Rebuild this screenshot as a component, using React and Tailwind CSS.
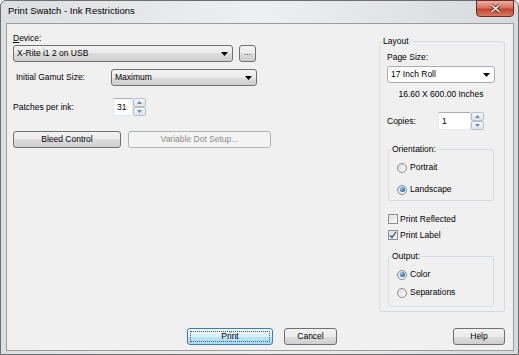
import React from 'react'

const btnFace = 'bg-[linear-gradient(#f2f2f2_0%,#ebebeb_50%,#dddddd_50%,#cfcfcf_100%)]'

const Arrow = () => (
  <svg width="7" height="4" viewBox="0 0 7 4" className="shrink-0">
    <path d="M0 0h7L3.5 4z" fill="#000" />
  </svg>
)

const Button = ({ children, className = '' }) => (
  <div
    className={`h-[17px] flex items-center justify-center rounded-[3px] border border-[#707070] ${btnFace} ${className}`}
  >
    {children}
  </div>
)

const Combo = ({ value, className = '', white }) => (
  <div
    className={`h-[17px] flex items-center justify-between pl-[3px] pr-[4px] rounded-[3px] border ${
      white ? 'border-[#abadb3] bg-white' : `border-[#707070] ${btnFace}`
    } ${className}`}
  >
    <span>{value}</span>
    <Arrow />
  </div>
)

const Spin = ({ value, width }) => (
  <div className="flex h-[18px]">
    <div
      className={`${width} h-full bg-white border border-[#e3e9ef] border-t-[#abadb3] flex items-center pl-[3px]`}
    >
      {value}
    </div>
    <div className="w-[13px] h-full flex flex-col">
      {['M0 3h5L2.5 0z', 'M0 0h5L2.5 3z'].map((d, i) => (
        <div
          key={i}
          className="flex-1 flex items-center justify-center border border-[#b7bfc8] rounded-[2px] bg-linear-to-b from-[#f5f7f9] to-[#e0e5ea]"
        >
          <svg width="5" height="3" viewBox="0 0 5 3">
            <path d={d} fill="#6d8aab" />
          </svg>
        </div>
      ))}
    </div>
  </div>
)

const Radio = ({ label, checked, className = '' }) => (
  <div className={`flex items-center h-[13px] ${className}`}>
    <div className="w-[10px] h-[10px] rounded-full border border-[#8c8c8c] bg-linear-to-br from-[#dcdcdc] to-[#fbfbfb] flex items-center justify-center">
      {checked && (
        <div className="w-[5px] h-[5px] rounded-full bg-[radial-gradient(circle_at_35%_35%,#8fd0f5,#1c65a8_70%)]" />
      )}
    </div>
    <span className="ml-[3px]">{label}</span>
  </div>
)

const Check = ({ label, checked, className = '' }) => (
  <div className={`flex items-center h-[12px] ${className}`}>
    <div className="w-[10px] h-[10px] border border-[#8e8f8f] bg-linear-to-br from-[#dedede] to-[#fbfbfb] flex items-center justify-center">
      {checked && (
        <svg width="8" height="8" viewBox="0 0 8 8">
          <path d="M1 4.2 3 6.6 7 0.8" stroke="#3a5a9a" strokeWidth="1.4" fill="none" />
        </svg>
      )}
    </div>
    <span className="ml-[2px]">{label}</span>
  </div>
)

const Group = ({ title, className = '', children }) => (
  <fieldset className={`border border-[#d5dbe0] rounded-[3px] p-0 m-0 min-w-0 ${className}`}>
    <legend className="ml-[3px] px-0 h-[11px] leading-[11px]">{title}</legend>
    {children}
  </fieldset>
)

export default function App() {
  return (
    <div className="w-[519px] h-[355px] font-['Liberation_Sans',Arial,sans-serif] text-[8.5px] leading-[11px] text-black">
      <div className="w-full h-full flex flex-col border border-[#6e6e6e] rounded-t-[6px] bg-linear-to-r from-[#dcdfe2] via-[#eeeff0] to-[#d6dadd]">
        {/* Title bar */}
        <div className="h-[22px] flex items-start shrink-0">
          <div className="pl-[7px] pt-[4px] text-[9.5px] leading-[12px]">Print Swatch - Ink Restrictions</div>
          <div className="ml-auto mr-[4px] -mt-px w-[38px] h-[17px] rounded-b-[4px] border border-[#6b2b20] bg-[linear-gradient(#eab0a3_0%,#d9715c_45%,#c4452d_55%,#d87a5e_100%)] flex items-center justify-center">
            <svg width="11" height="9" viewBox="0 0 11 9">
              <path d="M1.5 1 9.5 8M9.5 1 1.5 8" stroke="#5a2418" strokeWidth="3" />
              <path d="M1.5 1 9.5 8M9.5 1 1.5 8" stroke="#fff" strokeWidth="1.6" />
            </svg>
          </div>
        </div>

        {/* Client area */}
        <div className="flex-1 ml-[5px] mr-[4px] mb-[3px] border border-[#9c9c9c] bg-[#f0f0f0] flex flex-col">
          <div className="flex flex-1">
            {/* Left column */}
            <div className="flex-1 pl-[6px] pt-[9px] flex flex-col">
              <div>
                <span className="underline">D</span>evice:
              </div>
              <div className="flex mt-[1px]">
                <Combo value="X-Rite i1 2 on USB" className="w-[220px]" />
                <Button className="w-[17px] ml-[6px] pb-[2px] text-[#334]">...</Button>
              </div>
              <div className="flex items-center mt-[7px]">
                <span className="w-[95px] ml-[3px]">Initial Gamut Size:</span>
                <Combo value="Maximum" className="w-[146px]" />
              </div>
              <div className="flex items-center mt-[12px]">
                <span className="w-[100px]">Patches per ink:</span>
                <Spin value="31" width="w-[20px]" />
              </div>
              <div className="flex mt-[15px]">
                <Button className="w-[108px]">Bleed Control</Button>
                <div className="w-[143px] ml-[7px] h-[17px] flex items-center justify-center rounded-[3px] border border-[#adb2b5] bg-[#f4f4f4] text-[#8a8a8a]">
                  Variable Dot Setup...
                </div>
              </div>
            </div>

            {/* Layout group */}
            <Group title="Layout" className="w-[126px] h-[276px] mt-[12px] mr-[8px] shrink-0">
              <div className="pl-[7px] flex flex-col">
                <div className="mt-[5px]">Page Size:</div>
                <Combo value="17 Inch Roll" white className="w-[108px] mt-[3px] h-[16px]" />
                <div className="w-[108px] text-center mt-[6px]">16.60 X 600.00 Inches</div>
                <div className="flex items-center mt-[12px]">
                  <span className="w-[51px]">Copies:</span>
                  <Spin value="1" width="w-[33px]" />
                </div>
                <Group title="Orientation:" className="w-[106px] h-[57px] ml-[1px] mt-[14px]">
                  <Radio label="Portrait" className="ml-[8px] mt-[6px]" />
                  <Radio label="Landscape" checked className="ml-[8px] mt-[9px]" />
                </Group>
                <Check label="Print Reflected" className="ml-[1px] mt-[12px]" />
                <Check label="Print Label" checked className="ml-[1px] mt-[4px]" />
                <Group title="Output:" className="w-[106px] h-[56px] ml-[1px] mt-[10px]">
                  <Radio label="Color" checked className="ml-[8px] mt-[6px]" />
                  <Radio label="Separations" className="ml-[8px] mt-[5px]" />
                </Group>
              </div>
            </Group>
          </div>

          {/* Bottom buttons */}
          <div className="flex pb-[5px] pr-[8px]">
            <div className="ml-[180px] w-[86px] h-[17px] rounded-[3px] border border-[#3c7fb1] bg-[linear-gradient(#eaf6fd_0%,#d9f0fc_50%,#bee6fd_50%,#a7d9f5_100%)] p-[2px]">
              <div className="w-full h-full border border-dotted border-[#555] flex items-center justify-center">
                Print
              </div>
            </div>
            <Button className="w-[53px] ml-[11px]">Cancel</Button>
            <Button className="w-[52px] ml-auto">Help</Button>
          </div>
        </div>
      </div>
    </div>
  )
}
